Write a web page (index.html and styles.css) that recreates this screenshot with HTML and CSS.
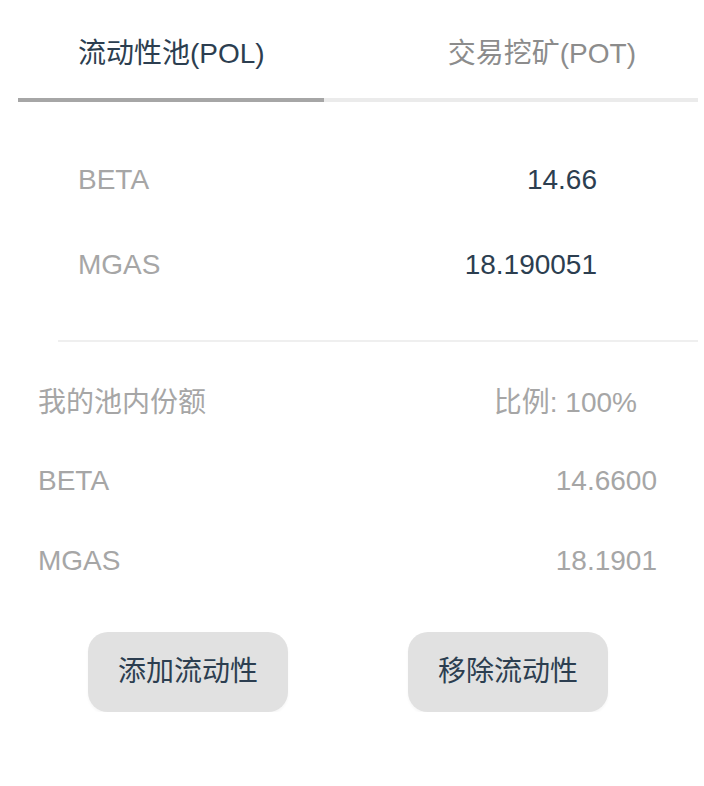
FILE: index.html
```html
<!DOCTYPE html>
<html lang="zh-CN">
<head>
<meta charset="utf-8">
<link rel="stylesheet" href="styles.css">
</head>
<body>
<div class="page">
  <div class="tabs">
    <div class="tab active">流动性池(POL)</div>
    <div class="tab">交易挖矿(POT)</div>
  </div>
  <div class="track"><div class="ink"></div></div>

  <div class="pool">
    <div class="row"><span class="label">BETA</span><span class="val">14.66</span></div>
    <div class="row"><span class="label">MGAS</span><span class="val">18.190051</span></div>
  </div>
  <div class="divider"></div>

  <div class="share">
    <div class="srow"><span>我的池内份额</span><span class="ratio">比例: 100%</span></div>
    <div class="srow"><span>BETA</span><span>14.6600</span></div>
    <div class="srow"><span>MGAS</span><span>18.1901</span></div>
  </div>

  <div class="actions">
    <button class="btn">添加流动性</button>
    <button class="btn">移除流动性</button>
  </div>
</div>
</body>
</html>
```
FILE: styles.css
```css
html, body {
  margin: 0;
  padding: 0;
  background: #fff;
}
body {
  font-family: "Liberation Sans", Arial, "Noto Sans CJK SC", sans-serif;
}
.page {
  padding: 0 6px 0 18px;
}
.tabs {
  display: flex;
  justify-content: space-between;
}
.tab {
  padding: 34px 60px 24px;
  font-size: 28px;
  line-height: 40px;
  color: #8c8c8c;
  white-space: nowrap;
}
.tab + .tab {
  padding-right: 62px;
}
.tab.active {
  color: #2c3e50;
}
.track {
  height: 4px;
  background: #ebebeb;
}
.ink {
  width: 306px;
  height: 4px;
  background: #a6a6a6;
}
.pool {
  padding: 35px 101px 0 60px;
}
.row {
  display: flex;
  justify-content: space-between;
  align-items: center;
  height: 85px;
}
.label {
  font-size: 28px;
  color: #a6a6a6;
}
.val {
  font-size: 28px;
  color: #2c3e50;
}
.divider {
  margin: 33px 0 0 40px;
  height: 2px;
  background: #efefef;
}
.share {
  padding: 19px 41px 0 20px;
}
.srow {
  display: flex;
  justify-content: space-between;
  align-items: center;
  height: 80px;
  font-size: 28px;
  color: #a6a6a6;
}
.srow:first-child {
  padding-bottom: 2px;
  height: 78px;
}
.ratio {
  margin-right: 20px;
}
.actions {
  display: flex;
  gap: 120px;
  padding: 31px 0 0 70px;
}
.btn {
  width: 200px;
  height: 80px;
  border: none;
  border-radius: 20px;
  background: #e1e1e1;
  color: #2c3e50;
  font-family: inherit;
  font-size: 28px;
  line-height: 36px;
  box-shadow: 0 2px 3px rgba(0,0,0,0.04);
  padding: 0 0 1px;
}
```
